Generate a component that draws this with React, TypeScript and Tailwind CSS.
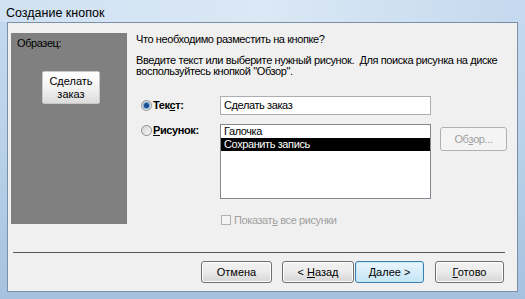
import React from 'react';

const font = { fontFamily: '"Liberation Sans", "DejaVu Sans", sans-serif' };

const WinButton: React.FC<{ label: React.ReactNode; focused?: boolean; width: string }> = ({ label, focused, width }) => (
  <div
    className={`${width} h-[22px] flex items-center justify-center rounded-[3px] border text-[11px] ${
      focused
        ? 'border-[#3c7fb1] bg-gradient-to-b from-[#eaf6fd] to-[#c4e5f6] shadow-[inset_0_0_0_1px_#c5e9fb]'
        : 'border-[#707070] bg-gradient-to-b from-[#f2f2f2] via-[#ebebeb] to-[#d5d5d5] shadow-[inset_0_0_0_1px_#fcfcfc]'
    } text-black`}
  >
    {label}
  </div>
);

const Radio: React.FC<{ checked?: boolean }> = ({ checked }) => (
  <div className="w-[11px] h-[11px] rounded-full border border-[#8e8f8f] bg-gradient-to-br from-[#d5d5d5] to-[#f8f8f8] flex items-center justify-center">
    {checked && <div className="w-[5px] h-[5px] rounded-full bg-[#1c4f8c] shadow-[0_0_0_1px_#6fa2d8]" />}
  </div>
);

export default function App() {
  return (
    <div
      className="w-[525px] h-[299px] flex flex-col bg-gradient-to-b from-[#c5daef] via-[#b9d1ea] to-[#a6c1df] overflow-hidden"
      style={font}
    >
      {/* title bar */}
      <div className="h-[22px] flex items-center pl-[6px] shrink-0 bg-gradient-to-r from-[#cfe1f3] via-[#dbe8f5] to-[#c4d9ee]">
        <span className="text-[12.5px] text-black mt-[4px]">Создание кнопок</span>
      </div>

      <div className="flex-1 flex px-[7px] pb-[7px]">
        <div className="flex-1 border border-[#7b8fa7] bg-[#f0f0f0] flex flex-col tracking-[-0.4px]">
          <div className="flex pt-[10px] pl-[3px]">
            {/* sample panel */}
            <div className="w-[116px] h-[191px] bg-[#808080] flex flex-col">
              <div className="text-[11px] text-black pl-[6px] pt-[4px] leading-[13px]">Образец:</div>
              <div className="ml-[31px] mt-[21px] w-[58px] h-[33px] rounded-[2px] border border-[#c8c8c8] bg-gradient-to-b from-[#ffffff] via-[#f3f3f3] to-[#dcdcdc] flex items-center justify-center text-center text-[11px] leading-[13px] text-black tracking-normal">
                Сделать
                <br />
                заказ
              </div>
            </div>

            {/* right content */}
            <div className="ml-[9px] flex flex-col text-[11px] text-black">
              <div className="leading-[13px]">Что необходимо разместить на кнопке?</div>
              <div className="mt-[9px] leading-[11px] whitespace-nowrap">
                Введите текст или выберите нужный рисунок.&nbsp;&nbsp;Для поиска рисунка на диске
                <br />
                воспользуйтесь кнопкой "Обзор".
              </div>

              <div className="mt-[19px] grid grid-cols-[84px_211px_auto] gap-y-[9px]">
                <div className="flex items-center gap-[1px] pl-[5px] h-[19px]">
                  <Radio checked />
                  <span className="font-semibold">
                    Тек<span className="underline">с</span>т:
                  </span>
                </div>
                <div className="h-[19px] border border-[#abadb3] bg-white flex items-center pl-[3px]">Сделать заказ</div>
                <div />

                <div className="flex items-start gap-[1px] pl-[5px] pt-[1px]">
                  <Radio />
                  <span className="font-semibold leading-[11px]">
                    <span className="underline">Р</span>исунок:
                  </span>
                </div>
                <div className="h-[75px] border border-[#828790] bg-white flex flex-col">
                  <div className="h-[13px] leading-[13px] pl-[3px]">Галочка</div>
                  <div className="h-[13px] leading-[13px] pl-[3px] bg-black text-white">Сохранить запись</div>
                </div>
                <div className="pl-[9px] pt-[3px]">
                  <div className="w-[67px] h-[24px] rounded-[3px] border border-[#adb2b5] bg-[#f4f4f4] flex items-center justify-center text-[#a0a0a0]">
                    Об<span className="underline">з</span>ор...
                  </div>
                </div>
              </div>

              <div className="mt-[13px] ml-[85px] flex items-center gap-[3px] text-[#a0a0a0]">
                <div className="w-[10px] h-[10px] border border-[#b1b1b1] bg-[#f4f4f4]" />
                <span>
                  Показат<span className="underline">ь</span> все рисунки
                </span>
              </div>
            </div>
          </div>

          <div className="mt-auto mx-[5px] mb-[8px]">
            <div className="h-[1px] bg-[#5a5a5a] mr-[7px]" />
          </div>

          <div className="flex justify-end items-center pr-[13px] pb-[8px] tracking-normal">
            <WinButton width="w-[71px]" label="Отмена" />
            <div className="w-[10px]" />
            <WinButton width="w-[72px]" label={<span>&lt; <span className="underline">Н</span>азад</span>} />
            <div className="w-[1px]" />
            <WinButton width="w-[69px]" focused label={<span><span className="underline">Д</span>алее &gt;</span>} />
            <div className="w-[11px]" />
            <WinButton width="w-[69px]" label={<span><span className="underline">Г</span>отово</span>} />
          </div>
        </div>
      </div>
    </div>
  );
}
